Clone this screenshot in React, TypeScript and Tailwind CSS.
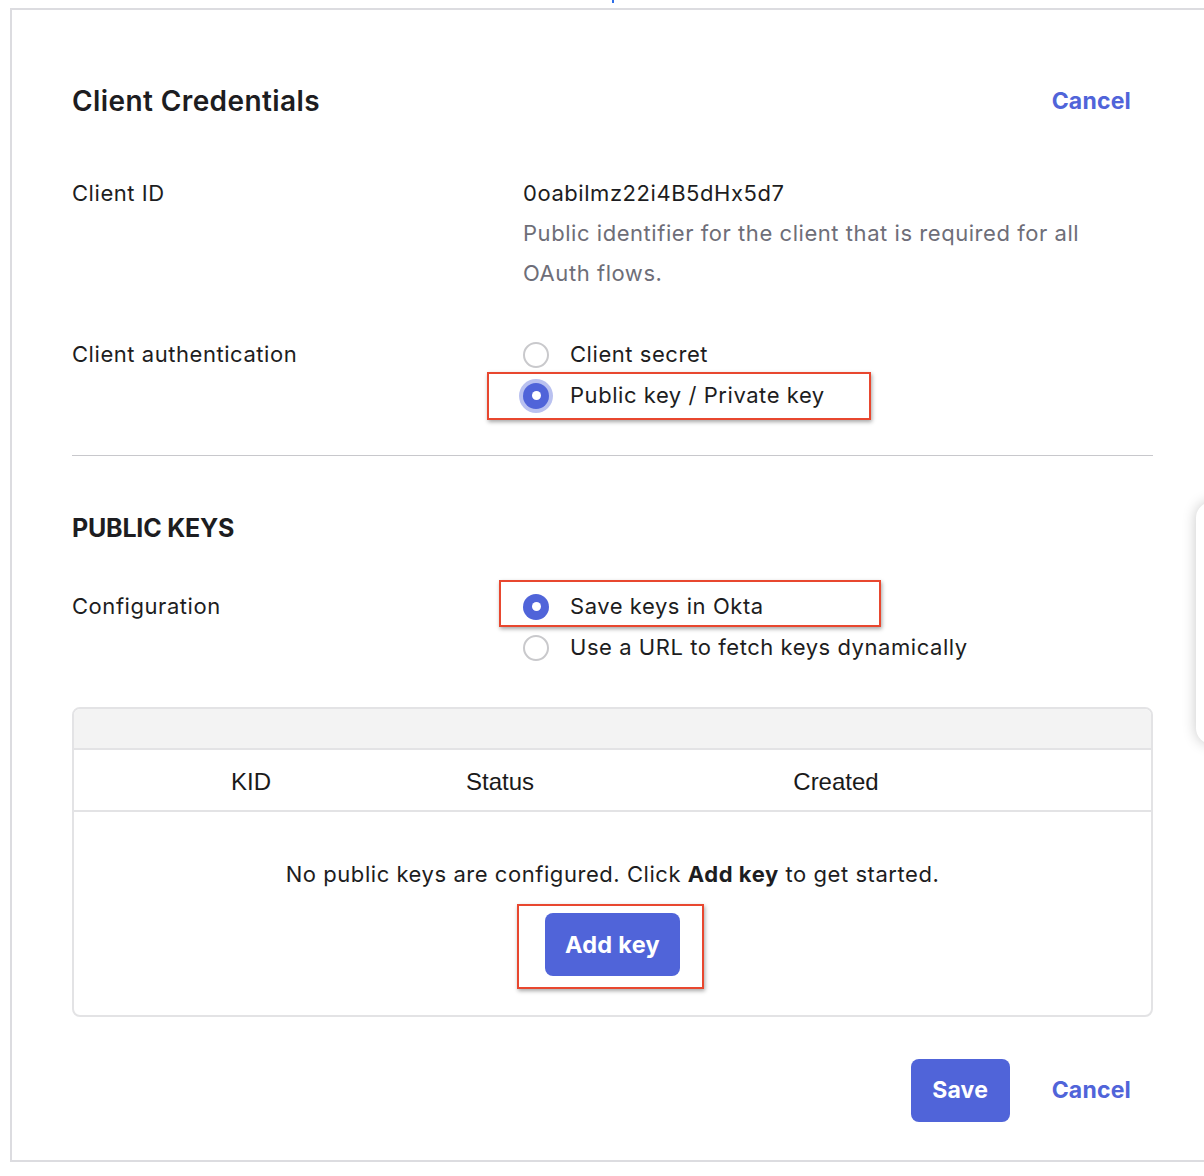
const Radio = ({ checked, halo }: { checked?: boolean; halo?: boolean }) => {
    if (!checked) {
        return <span className="block w-[26px] h-[26px] rounded-full border-2 border-[#c9c9cc] bg-white shrink-0" />;
    }
    return (
        <span className={`flex items-center justify-center w-[26px] h-[26px] rounded-full bg-[#5064d9] shrink-0 ${halo ? "ring-4 ring-[#5064d9]/40" : ""}`}>
            <span className="block w-[9px] h-[9px] rounded-full bg-white" />
        </span>
    );
};

const Mark = ({ className }: { className: string }) => (
    <span className={`absolute border-2 border-[#e8472f] shadow-[1px_2px_4px_rgba(0,0,0,0.35)] pointer-events-none ${className}`} />
);

const Option = ({ label, checked, halo, mark }: { label: string; checked?: boolean; halo?: boolean; mark?: string }) => (
    <div className="relative flex items-center h-[41px] gap-[21px]">
        {mark && <Mark className={mark} />}
        <Radio checked={checked} halo={halo} />
        <span>{label}</span>
    </div>
);

const App = () => {
    return (
        <div className="relative w-[1204px] h-[1176px] overflow-hidden bg-white text-[22px] tracking-[0.55px] text-[#1d1d21]" style={{ fontFamily: "Inter, 'Noto Sans', sans-serif" }}>
            <span className="absolute left-[612px] top-0 w-[2px] h-[3px] bg-[#2f6fe8]" />
            <div className="ml-[10px] mt-2 w-[1240px] border-2 border-[#dcdce0] pl-[60px] pt-[71px] pb-[38px]">
                <div className="w-[1081px]">
                    <div className="flex items-center justify-between h-10">
                        <h1 className="text-[28px] font-semibold tracking-[0.4px]">Client Credentials</h1>
                        <a className="pr-[22px] text-[23px] font-bold tracking-[0.2px] text-[#5064d9]">Cancel</a>
                    </div>

                    <div className="flex mt-[52px] leading-10">
                        <div className="w-[451px]">Client ID</div>
                        <div>
                            <div>0oabilmz22i4B5dHx5d7</div>
                            <div className="text-[#6e6e78] w-[580px]">Public identifier for the client that is required for all OAuth flows.</div>
                        </div>
                    </div>

                    <div className="flex mt-[41px]">
                        <div className="w-[451px] leading-[41px]">Client authentication</div>
                        <div>
                            <Option label="Client secret" />
                            <Option label="Public key / Private key" checked halo mark="-left-9 -top-[3px] w-[384px] h-[48px]" />
                        </div>
                    </div>

                    <hr className="mt-[39px] border-t border-[#c8c8cc]" />

                    <h2 className="mt-[52px] h-10 leading-10 text-[25px] font-bold tracking-[-0.2px]">PUBLIC KEYS</h2>

                    <div className="flex mt-[38px]">
                        <div className="w-[451px] leading-[41px]">Configuration</div>
                        <div>
                            <Option label="Save keys in Okta" checked mark="-left-6 -top-[6px] w-[382px] h-[47px]" />
                            <Option label="Use a URL to fetch keys dynamically" />
                        </div>
                    </div>

                    <div className="mt-[39px] h-[310px] rounded-lg border-2 border-[#e3e3e5] overflow-hidden">
                        <div className="h-[41px] bg-[#f3f3f3] border-b-2 border-[#e3e3e5]" />
                        <div className="grid grid-cols-[354px_144px_528px_1fr] h-[62px] pt-[3px] items-center border-b-2 border-[#e3e3e5] text-center text-[24px] tracking-normal text-[#1a1a1a]" style={{ fontFamily: "'Liberation Sans', Arial, sans-serif" }}>
                            <span>KID</span>
                            <span>Status</span>
                            <span>Created</span>
                            <span />
                        </div>
                        <div className="flex flex-col items-center pt-[50px]">
                            <p className="leading-6">No public keys are configured. Click <b>Add key</b> to get started.</p>
                            <div className="relative mt-[27px]">
                                <Mark className="-left-7 -top-[9px] w-[187px] h-[85px]" />
                                <button className="w-[135px] h-[63px] rounded-lg bg-[#5064d9] text-white text-[23.5px] font-bold tracking-[0.3px]">Add key</button>
                            </div>
                        </div>
                    </div>

                    <div className="flex justify-end items-center mt-[42px] gap-[42px]">
                        <button className="w-[99px] h-[63px] rounded-lg bg-[#5064d9] text-white text-[23px] font-bold tracking-[0.2px]">Save</button>
                        <a className="pr-[22px] text-[23px] font-bold tracking-[0.2px] text-[#5064d9]">Cancel</a>
                    </div>
                </div>
            </div>
            <div className="absolute left-[1196px] top-[502px] w-[80px] h-[242px] rounded-2xl bg-white shadow-[0_0_14px_rgba(0,0,0,0.22)]" />
        </div>
    );
};

export default App;
